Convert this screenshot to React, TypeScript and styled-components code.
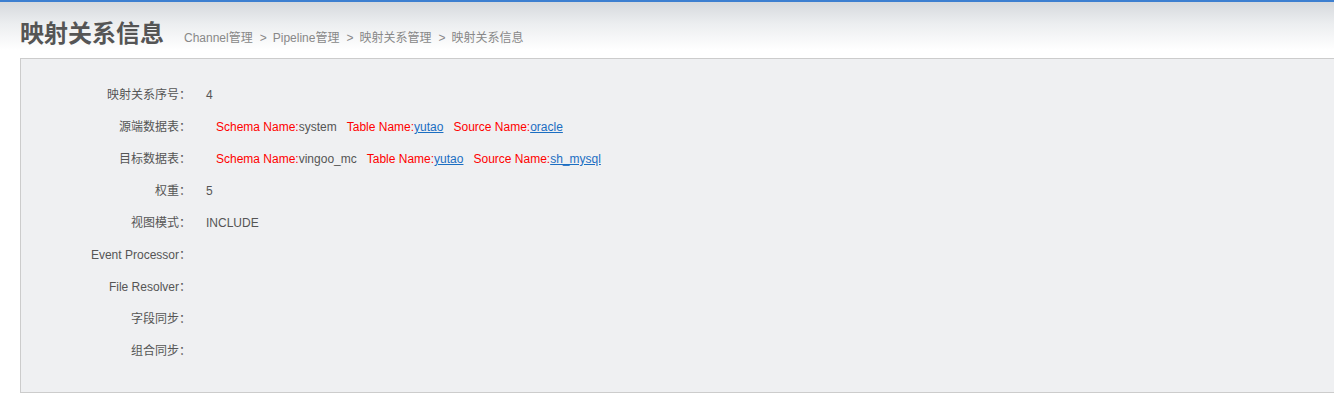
import React from 'react';
import styled, { createGlobalStyle } from 'styled-components';

const GlobalStyle = createGlobalStyle`
  html, body {
    margin: 0;
    padding: 0;
    background: #ffffff;
    font-family: "Liberation Sans", Arial, "Noto Sans CJK SC", sans-serif;
  }
`;

type Part = { label: string; value: string; link?: boolean };

type Row = {
  label: string;
  value?: string;
  parts?: Part[];
};

const rows: Row[] = [
  { label: '映射关系序号', value: '4' },
  {
    label: '源端数据表',
    parts: [
      { label: 'Schema Name:', value: 'system' },
      { label: 'Table Name:', value: 'yutao', link: true },
      { label: 'Source Name:', value: 'oracle', link: true },
    ],
  },
  {
    label: '目标数据表',
    parts: [
      { label: 'Schema Name:', value: 'vingoo_mc' },
      { label: 'Table Name:', value: 'yutao', link: true },
      { label: 'Source Name:', value: 'sh_mysql', link: true },
    ],
  },
  { label: '权重', value: '5' },
  { label: '视图模式', value: 'INCLUDE' },
  { label: 'Event Processor' },
  { label: 'File Resolver' },
  { label: '字段同步' },
  { label: '组合同步' },
];

function App() {
  return (
    <Page>
      <GlobalStyle />
      <Header>
        <Title>映射关系信息</Title>
        <Crumbs>
          <span>Channel管理</span>
          <Sep>&gt;</Sep>
          <span>Pipeline管理</span>
          <Sep>&gt;</Sep>
          <span>映射关系管理</span>
          <Sep>&gt;</Sep>
          <span>映射关系信息</span>
        </Crumbs>
      </Header>
      <Panel>
        {rows.map((row) => (
          <InfoRow key={row.label}>
            <Label>{row.label}：</Label>
            <Value $indent={!!row.parts}>
              {row.value}
              {row.parts?.map((p) => (
                <Pair key={p.label}>
                  <Key>{p.label}</Key>
                  {p.link ? <Link href="#">{p.value}</Link> : p.value}
                </Pair>
              ))}
            </Value>
          </InfoRow>
        ))}
      </Panel>
    </Page>
  );
}

const Page = styled.div`
  width: 1334px;
  height: 411px;
  overflow: hidden;
  border-top: 2px solid #3d7fd0;
  box-sizing: border-box;
  background: linear-gradient(to bottom, #d6d9dd 0px, #eceef0 22px, #ffffff 48px, #ffffff 100%);
`;

const Header = styled.div`
  display: flex;
  align-items: baseline;
  height: 56px;
  padding-left: 20px;
  box-sizing: border-box;
  padding-top: 14px;
`;

const Title = styled.h1`
  margin: 0;
  font-size: 24px;
  font-weight: bold;
  color: #555555;
  font-family: "Noto Sans CJK SC", sans-serif;
  line-height: 32px;
`;

const Crumbs = styled.div`
  margin-left: 20px;
  font-size: 12px;
  color: #888888;
  font-family: "Liberation Sans", "Noto Sans CJK SC", sans-serif;
`;

const Sep = styled.span`
  margin: 0 6px 0 7px;
`;

const Panel = styled.div`
  margin-left: 20px;
  border: 1px solid #cccccc;
  border-right: none;
  background: #eff0f2;
  height: 335px;
  box-sizing: border-box;
  padding-top: 20px;
`;

const InfoRow = styled.div`
  display: grid;
  grid-template-columns: 170px 1fr;
  height: 32px;
  line-height: 32px;
  font-size: 12px;
  color: #555555;
`;

const Label = styled.div`
  text-align: right;
  white-space: nowrap;
`;

const Value = styled.div<{ $indent: boolean }>`
  padding-left: ${(p) => (p.$indent ? '25px' : '15px')};
  display: flex;
  gap: 10px;
  white-space: nowrap;
`;

const Pair = styled.span``;

const Key = styled.span`
  color: #ff0000;
`;

const Link = styled.a`
  color: #1b6ec2;
  text-decoration: underline;
`;

export default App;
